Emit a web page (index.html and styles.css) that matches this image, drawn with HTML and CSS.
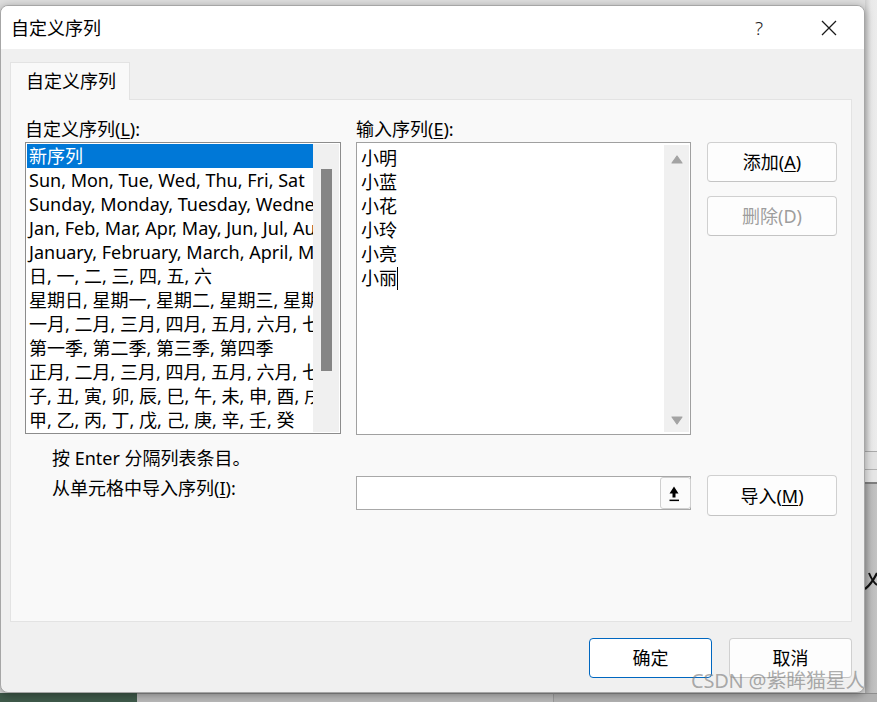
FILE: index.html
```html
<!DOCTYPE html>
<html lang="zh-CN">
<head>
<meta charset="utf-8">
<title>自定义序列</title>
<link rel="stylesheet" href="styles.css">
</head>
<body>
<div class="desk">
  <div class="row">
    <div class="window">
      <div class="titlebar">
        <span class="title">自定义序列</span>
        <span class="cap help">?</span>
        <span class="cap close">
          <svg width="16" height="16" viewBox="0 0 16 16"><path d="M1 1 L15 15 M15 1 L1 15" stroke="#1a1a1a" stroke-width="1.3" fill="none"/></svg>
        </span>
      </div>
      <div class="body">
        <div class="tabs"><div class="tab">自定义序列</div></div>
        <div class="panel">
          <div class="cols">
            <div class="col">
              <div class="label">自定义序列(<u>L</u>):</div>
              <div class="listbox">
                <div class="items">
                  <div class="item sel">新序列</div>
                  <div class="item">Sun, Mon, Tue, Wed, Thu, Fri, Sat</div>
                  <div class="item">Sunday, Monday, Tuesday, Wednesday, Thursday, Friday, Saturday</div>
                  <div class="item">Jan, Feb, Mar, Apr, May, Jun, Jul, Aug, Sep, Oct, Nov, Dec</div>
                  <div class="item">January, February, March, April, May, June, July, August, September, October, November, December</div>
                  <div class="item">日, 一, 二, 三, 四, 五, 六</div>
                  <div class="item">星期日, 星期一, 星期二, 星期三, 星期四, 星期五, 星期六</div>
                  <div class="item">一月, 二月, 三月, 四月, 五月, 六月, 七月, 八月, 九月, 十月, 十一月, 十二月</div>
                  <div class="item">第一季, 第二季, 第三季, 第四季</div>
                  <div class="item">正月, 二月, 三月, 四月, 五月, 六月, 七月, 八月, 九月, 十月, 十一月, 腊月</div>
                  <div class="item">子, 丑, 寅, 卯, 辰, 巳, 午, 未, 申, 酉, 戌, 亥</div>
                  <div class="item">甲, 乙, 丙, 丁, 戊, 己, 庚, 辛, 壬, 癸</div>
                </div>
                <div class="track"><div class="thumb"></div></div>
              </div>
            </div>
            <div class="col">
              <div class="label">输入序列(<u>E</u>):</div>
              <div class="editbox">
                <div class="lines">
                  <div class="line">小明</div>
                  <div class="line">小蓝</div>
                  <div class="line">小花</div>
                  <div class="line">小玲</div>
                  <div class="line">小亮</div>
                  <div class="line">小丽<span class="caret"></span></div>
                </div>
                <div class="vbar">
                  <svg width="12" height="9" viewBox="0 0 12 9"><path d="M6 1 L11 8 L1 8 Z" fill="#a3a3a3" stroke="#a3a3a3" stroke-linejoin="round" stroke-width="1.2"/></svg>
                  <svg width="12" height="9" viewBox="0 0 12 9"><path d="M1 1 L11 1 L6 8 Z" fill="#a3a3a3" stroke="#a3a3a3" stroke-linejoin="round" stroke-width="1.2"/></svg>
                </div>
              </div>
            </div>
            <div class="col btncol">
              <div class="btn">添加(<u>A</u>)</div>
              <div class="btn disabled">删除(D)</div>
            </div>
          </div>
          <div class="hint">按 Enter 分隔列表条目。</div>
          <div class="import">
            <div class="ilabel">从单元格中导入序列(<u>I</u>):</div>
            <div class="ibox">
              <div class="ifield"></div>
              <div class="collapse">
                <svg width="12" height="18" viewBox="0 0 12 18"><path d="M6 2.5 L10.5 9.5 L7.5 9.5 L7.5 13.5 L4.5 13.5 L4.5 9.5 L1.5 9.5 Z" fill="#000"/><rect x="1.5" y="15.6" width="9.5" height="1.5" fill="#000"/></svg>
              </div>
            </div>
            <div class="btn ibtn">导入(<u>M</u>)</div>
          </div>
        </div>
        <div class="footer">
          <div class="btn fbtn ok">确定</div>
          <div class="btn fbtn">取消</div>
          <div class="watermark">CSDN @紫眸猫星人</div>
        </div>
      </div>
    </div>
    <div class="side">
      <div class="s1"></div>
      <div class="s2"></div>
      <div class="s3"></div>
      <div class="s4">
        <svg width="12" height="40" viewBox="0 0 12 40"><path d="M0 30 C4 27 8 22 12 14" stroke="#111" stroke-width="2.2" fill="none"/><path d="M4 14 C6 19 8 23 12 26" stroke="#111" stroke-width="2" fill="none"/></svg>
      </div>
    </div>
  </div>
  <div class="bottom">
    <div class="green"></div>
    <div class="grey1"></div>
    <div class="grey2"></div>
  </div>
</div>
</body>
</html>
```

FILE: styles.css
```css
* { box-sizing: border-box; }
html, body { margin: 0; padding: 0; }
body {
  background: #dedede;
  font-family: "Noto Sans", "Noto Sans CJK SC", sans-serif;
  font-size: 18px;
  color: #000;
  width: 877px;
  height: 702px;
  overflow: hidden;
}
u { text-decoration: underline; text-underline-offset: 2px; text-decoration-thickness: 1px; }

.desk { display: flex; flex-direction: column; height: 702px; }
.row { display: flex; height: 693px; padding-top: 5px; flex: none; }

.window {
  flex: none;
  width: 865px;
  height: 688px;
  border: 1px solid #a6a6a6;
  border-radius: 8px;
  background: #f0f0f0;
  display: flex;
  flex-direction: column;
  overflow: hidden;
  box-shadow: 0 2px 9px rgba(0,0,0,0.35);
  position: relative;
  z-index: 2;
}

.titlebar {
  height: 43px;
  background: #fff;
  display: flex;
  align-items: center;
  padding-left: 10px;
  padding-right: 12px;
  flex: none;
}
.title { flex: 1; line-height: 24px; }
.cap { width: 46px; display: flex; justify-content: center; align-items: center; height: 43px; }
.help { font-size: 19px; color: #222; font-weight: 300; margin-right: 24px; }
.close svg { display: block; }

.body {
  flex: 1;
  padding: 13px 12px 0 9px;
  display: flex;
  flex-direction: column;
  position: relative;
}
.tabs { display: flex; height: 37px; }
.tab {
  width: 120px;
  height: 38px;
  border: 1px solid #e3e3e3;
  border-bottom: none;
  background: #f9f9f9;
  padding-left: 15px;
  line-height: 36px;
  position: relative;
  z-index: 1;
}
.panel {
  height: 523px;
  background: #f9f9f9;
  border: 1px solid #e3e3e3;
  padding: 17px 0 0 14px;
}
.cols { display: flex; gap: 15px; }
.col { display: flex; flex-direction: column; }
.label { line-height: 24px; height: 24px; margin-bottom: 1px; }

.listbox {
  width: 316px;
  height: 292px;
  border: 1px solid #8c8c8c;
  background: #fff;
  padding: 1px;
  display: flex;
}
.items { width: 286px; overflow: hidden; }
.item {
  height: 24px;
  line-height: 24px;
  padding-left: 2px;
  white-space: nowrap;
  overflow: hidden;
}
.item.sel { background: #0078d7; color: #fff; }
.track { width: 26px; background: #f0f0f0; padding: 25px 0 0 8px; }
.thumb { width: 11px; height: 202px; background: #858585; }

.editbox {
  width: 335px;
  height: 293px;
  border: 1px solid #a0a0a0;
  background: #fff;
  display: flex;
  padding: 2px 1px 2px 0;
}
.lines { flex: 1; padding: 1px 0 0 4px; }
.line { height: 24px; line-height: 24px; display: flex; align-items: center; }
.caret { width: 1px; height: 23px; background: #000; }
.vbar {
  width: 25px;
  background: #f0f0f0;
  display: flex;
  flex-direction: column;
  justify-content: space-between;
  align-items: center;
  padding: 10px 0 7px;
}
.vbar svg { display: block; }

.btncol { margin-left: 1px; padding-top: 25px; gap: 14px; }
.btn {
  width: 130px;
  height: 40px;
  border: 1px solid #d0d0d0;
  border-bottom-color: #c4c4c4;
  border-radius: 4px;
  background: #fdfdfd;
  display: flex;
  align-items: center;
  justify-content: center;
  line-height: 24px;
}
.btn.disabled { color: #9d9d9d; }

.hint { margin: 11px 0 0 27px; line-height: 24px; }
.import { display: flex; margin-top: 5px; padding-left: 27px; align-items: flex-start; }
.ilabel { width: 304px; line-height: 24px; margin-top: 1px; }
.ibox {
  width: 335px;
  height: 34px;
  margin-top: 1px;
  border: 1px solid #a8a8a8;
  background: #fff;
  display: flex;
}
.ifield { flex: 1; }
.collapse {
  width: 31px;
  height: 32px;
  border: 1px solid #cfcfcf;
  border-radius: 3px;
  background: #fbfbfb;
  display: flex;
  align-items: center;
  justify-content: center;
  padding-right: 3px;
  margin-right: -1px;
}
.collapse svg { display: block; }
.ibtn { margin-left: 16px; height: 41px; }

.footer {
  display: flex;
  justify-content: flex-end;
  gap: 17px;
  margin-top: 16px;
  position: relative;
}
.fbtn { width: 123px; height: 40px; background: #fdfdfd; }
.fbtn.ok { border: 1px solid #0067c0; background: #fff; }
.watermark {
  position: absolute;
  left: 681px;
  top: 30px;
  font-size: 20px;
  line-height: 26px;
  color: rgba(120,120,120,0.62);
  white-space: nowrap;
  letter-spacing: -0.2px;
}

.side { flex: 1; min-width: 0; overflow: hidden; display: flex; flex-direction: column; margin-top: -5px; }
.s1 { height: 452px; background: linear-gradient(to right, #cfcfcf, #e9e9e9 6px, #ececec); border-bottom: 1px solid #a9a9a9; }
.s2 { height: 18px; background: #e2e2e2; border-bottom: 1px solid #b0b0b0; }
.s3 { height: 14px; background: #e6e6e6; border-bottom: 2px solid #7e7e7e; }
.s4 { flex: 1; background: linear-gradient(to right, #a9a9a9, #bdbdbd 6px, #c3c3c3); padding-top: 75px; }
.s4 svg { display: block; }

.bottom { display: flex; flex: 1; }
.green { width: 137px; background: #3f5a4a; }
.grey1 { width: 416px; background: #b8b8b8; border-top: 1px solid #8f8f8f; }
.grey2 { flex: 1; background: #b1b1b1; border-top: 1px solid #8f8f8f; border-left: 1px solid #9a9a9a; }
```
